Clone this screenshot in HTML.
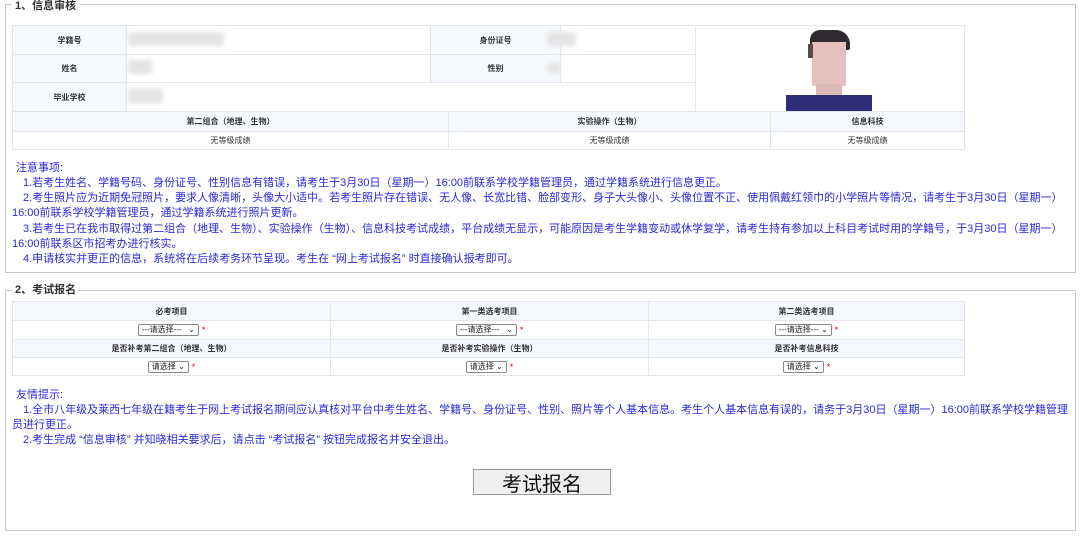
<!DOCTYPE html>
<html><head><meta charset="utf-8"><style>
*{margin:0;padding:0;box-sizing:border-box}
body{width:1080px;height:537px;background:#fff;font-family:"Liberation Sans","Noto Sans CJK SC",sans-serif;position:relative;overflow:hidden}
.fs{position:absolute;border:1px solid #c8c8c8}
.lg{position:absolute;background:#fff;font-weight:bold;font-size:11px;color:#333;padding:0 3px;line-height:12px}
.c{position:absolute;border:1px solid #e2e6ec;font-size:8px;color:#333;display:flex;align-items:center;justify-content:center}
.h{background:#f5f8fc;font-weight:bold}
.blur{position:absolute;background:#e4e4e4;filter:blur(2px)}
.t{position:absolute;left:12px;font-size:11px;color:#2a2ad8;white-space:nowrap;line-height:15px}
.sel{display:inline-block;border:1px solid #888;border-radius:2px;font-size:8px;height:12px;line-height:10px;padding:0 3px;color:#222;background:#fff}
.star{color:#e00;font-size:9px;margin-left:3px}
</style></head><body>
<div class="fs" style="left:5px;top:4px;width:1071px;height:269px"></div>
<div class="lg" style="left:12px;top:0px">1、信息审核</div>

<div class="c h" style="left:12px;top:25px;width:115px;height:30px">学籍号</div>
<div class="c" style="left:126px;top:25px;width:305px;height:30px"></div>
<div class="c h" style="left:430px;top:25px;width:131px;height:30px">身份证号</div>
<div class="c" style="left:560px;top:25px;width:136px;height:30px"></div>
<div class="c h" style="left:12px;top:54px;width:115px;height:29px">姓名</div>
<div class="c" style="left:126px;top:54px;width:305px;height:29px"></div>
<div class="c h" style="left:430px;top:54px;width:131px;height:29px">性别</div>
<div class="c" style="left:560px;top:54px;width:136px;height:29px"></div>
<div class="c h" style="left:12px;top:82px;width:115px;height:30px">毕业学校</div>
<div class="c" style="left:126px;top:82px;width:570px;height:30px"></div>
<div class="c" style="left:695px;top:25px;width:270px;height:87px"></div>
<div class="blur" style="left:128px;top:32px;width:96px;height:14px"></div>
<div class="blur" style="left:128px;top:60px;width:24px;height:14px"></div>
<div class="blur" style="left:128px;top:89px;width:35px;height:14px"></div>
<div class="blur" style="left:548px;top:32px;width:28px;height:14px"></div>
<div class="blur" style="left:548px;top:63px;width:12px;height:10px"></div>
<!-- photo -->
<div style="position:absolute;left:810px;top:30px;width:40px;height:20px;background:#2e2a30;border-radius:10px 14px 2px 2px"></div>
<div style="position:absolute;left:812px;top:42px;width:34px;height:44px;background:#e6c0bd"></div>
<div style="position:absolute;left:808px;top:44px;width:5px;height:14px;background:#5a4a4e"></div>
<div style="position:absolute;left:816px;top:84px;width:26px;height:12px;background:#dcbab5"></div>
<div style="position:absolute;left:786px;top:95px;width:86px;height:16px;background:#2c2f78"></div>

<div class="c h" style="left:12px;top:111px;width:437px;height:21px">第二组合（地理、生物）</div>
<div class="c h" style="left:448px;top:111px;width:323px;height:21px">实验操作（生物）</div>
<div class="c h" style="left:770px;top:111px;width:195px;height:21px">信息科技</div>
<div class="c" style="left:12px;top:131px;width:437px;height:19px">无等级成绩</div>
<div class="c" style="left:448px;top:131px;width:323px;height:19px">无等级成绩</div>
<div class="c" style="left:770px;top:131px;width:195px;height:19px">无等级成绩</div>

<div class="t" style="top:161px;left:16px">注意事项:</div>
<div class="t" style="top:176px;left:23px">1.若考生姓名、学籍号码、身份证号、性别信息有错误，请考生于3月30日（星期一）16:00前联系学校学籍管理员，通过学籍系统进行信息更正。</div>
<div class="t" style="top:191px;left:23px">2.考生照片应为近期免冠照片，要求人像清晰，头像大小适中。若考生照片存在错误、无人像、长宽比错、脸部变形、身子大头像小、头像位置不正、使用佩戴红领巾的小学照片等情况，请考生于3月30日（星期一）</div>
<div class="t" style="top:206px">16:00前联系学校学籍管理员，通过学籍系统进行照片更新。</div>
<div class="t" style="top:222px;left:23px">3.若考生已在我市取得过第二组合（地理、生物）、实验操作（生物）、信息科技考试成绩，平台成绩无显示，可能原因是考生学籍变动或休学复学，请考生持有参加以上科目考试时用的学籍号，于3月30日（星期一）</div>
<div class="t" style="top:237px">16:00前联系区市招考办进行核实。</div>
<div class="t" style="top:252px;left:23px">4.申请核实并更正的信息，系统将在后续考务环节呈现。考生在 “网上考试报名” 时直接确认报考即可。</div>

<div class="fs" style="left:5px;top:290px;width:1071px;height:241px"></div>
<div class="lg" style="left:12px;top:284px">2、考试报名</div>

<div class="c h" style="left:12px;top:301px;width:319px;height:20px">必考项目</div>
<div class="c h" style="left:330px;top:301px;width:319px;height:20px">第一类选考项目</div>
<div class="c h" style="left:648px;top:301px;width:317px;height:20px">第二类选考项目</div>
<div class="c" style="left:12px;top:320px;width:319px;height:20px"><span class="sel">---请选择--- &nbsp; ⌄</span><span class="star">*</span></div>
<div class="c" style="left:330px;top:320px;width:319px;height:20px"><span class="sel">---请选择--- &nbsp; ⌄</span><span class="star">*</span></div>
<div class="c" style="left:648px;top:320px;width:317px;height:20px"><span class="sel">---请选择--- ⌄</span><span class="star">*</span></div>
<div class="c h" style="left:12px;top:339px;width:319px;height:19px">是否补考第二组合（地理、生物）</div>
<div class="c h" style="left:330px;top:339px;width:319px;height:19px">是否补考实验操作（生物）</div>
<div class="c h" style="left:648px;top:339px;width:317px;height:19px">是否补考信息科技</div>
<div class="c" style="left:12px;top:357px;width:319px;height:19px"><span class="sel">请选择 ⌄</span><span class="star">*</span></div>
<div class="c" style="left:330px;top:357px;width:319px;height:19px"><span class="sel">请选择 ⌄</span><span class="star">*</span></div>
<div class="c" style="left:648px;top:357px;width:317px;height:19px"><span class="sel">请选择 ⌄</span><span class="star">*</span></div>

<div class="t" style="top:388px;left:16px">友情提示:</div>
<div class="t" style="top:403px;left:23px">1.全市八年级及莱西七年级在籍考生于网上考试报名期间应认真核对平台中考生姓名、学籍号、身份证号、性别、照片等个人基本信息。考生个人基本信息有误的，请务于3月30日（星期一）16:00前联系学校学籍管理</div>
<div class="t" style="top:418px">员进行更正。</div>
<div class="t" style="top:433px;left:23px">2.考生完成 “信息审核” 并知晓相关要求后，请点击 “考试报名” 按钮完成报名并安全退出。</div>

<div style="position:absolute;left:473px;top:469px;width:138px;height:26px;border:1px solid #999;background:#efefef;font-size:20px;color:#111;text-align:center;line-height:30px;overflow:hidden">考试报名</div>
</body></html>
